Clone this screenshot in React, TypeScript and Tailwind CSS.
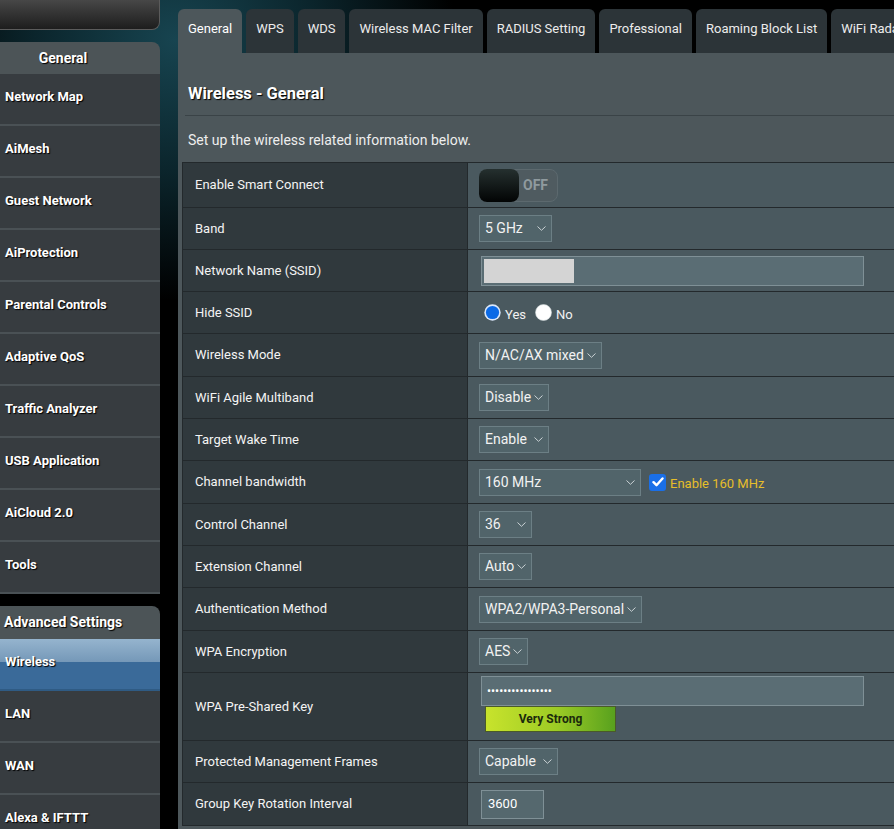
import React from 'react'

/*
  ASUS router admin – Wireless > General page. Sidebar menu on the left,
  tabbed settings panel on the right with a label/value table.
*/

const GENERAL_MENU = [
  'Network Map',
  'AiMesh',
  'Guest Network',
  'AiProtection',
  'Parental Controls',
  'Adaptive QoS',
  'Traffic Analyzer',
  'USB Application',
  'AiCloud 2.0',
  'Tools',
]

const ADVANCED_MENU = ['Wireless', 'LAN', 'WAN', 'Alexa & IFTTT']

const TABS = [
  'General',
  'WPS',
  'WDS',
  'Wireless MAC Filter',
  'RADIUS Setting',
  'Professional',
  'Roaming Block List',
  'WiFi Radar',
]

function NavItem({ label, active }: { label: string; active?: boolean }) {
  return (
    <div
      className={`flex h-[52px] items-center border-b-2 pb-[4px] pl-[5px] text-[13px] font-bold text-white [text-shadow:1px_1px_1px_#000] ${
        active
          ? 'border-[#2f5b84] bg-[linear-gradient(to_bottom,#95b4ce_0%,#7598b8_46%,#3a6a99_47%,#3a6a99_100%)]'
          : 'border-[#4a5155] bg-[#373c40]'
      }`}
    >
      {label}
    </div>
  )
}

function Sidebar() {
  return (
    <aside className="w-[160px] shrink-0">
      <div className="h-[30px] rounded-br-[8px] border-r border-b border-[#5b5b5b] bg-[linear-gradient(to_bottom,#474747,#1d1d1d)]" />

      <div className="mt-[12px]">
        <div className="flex h-[32px] items-center justify-center rounded-tr-[8px] bg-[#4c5457] pr-[34px] text-[14px] font-bold text-white [text-shadow:1px_1px_1px_#000]">
          General
        </div>
        {GENERAL_MENU.map((m) => (
          <NavItem key={m} label={m} />
        ))}
      </div>

      <div className="mt-[12px]">
        <div className="flex h-[33px] items-center rounded-tr-[8px] bg-[#4c5457] pl-[4px] text-[14px] font-bold text-white [text-shadow:1px_1px_1px_#000]">
          Advanced Settings
        </div>
        {ADVANCED_MENU.map((m) => (
          <NavItem key={m} label={m} active={m === 'Wireless'} />
        ))}
      </div>
    </aside>
  )
}

function Chevron() {
  return (
    <svg className="shrink-0" width="9" height="5" viewBox="0 0 9 5" fill="none" stroke="#c9d1d4" strokeWidth="1">
      <path d="M0.5 0.5 4.5 4.3 8.5 0.5" />
    </svg>
  )
}

function Select({ value, width }: { value: string; width: string }) {
  return (
    <div
      className={`flex h-[27px] shrink-0 items-center justify-between gap-[2px] overflow-hidden border border-[#6c7f85] bg-[#51646a] pr-[5px] pl-[5px] text-[14px] whitespace-nowrap text-[#f2f2f2] ${width}`}
    >
      <span>{value}</span>
      <Chevron />
    </div>
  )
}

function Toggle() {
  return (
    <div className="flex h-[33px] w-[79px] items-center rounded-[8px] border border-[#5c696e] bg-[#4f5b60]">
      <div className="-ml-px h-[33px] w-[40px] rounded-[8px] bg-[linear-gradient(to_bottom,#25302f,#020404)]" />
      <span className="ml-[4px] text-[14px] font-bold text-[#8f9a9e]">OFF</span>
    </div>
  )
}

function Radio({ checked }: { checked?: boolean }) {
  return checked ? (
    <svg width="17" height="17" viewBox="0 0 17 17">
      <circle cx="8.5" cy="8.5" r="8.2" fill="#dbe8fb" />
      <circle cx="8.5" cy="8.5" r="6.6" fill="#0b6ae6" />
    </svg>
  ) : (
    <svg width="17" height="17" viewBox="0 0 17 17">
      <circle cx="8.5" cy="8.5" r="8" fill="#ffffff" stroke="#cfd6d9" strokeWidth="0.6" />
    </svg>
  )
}

function Row({
  label,
  height,
  children,
  top,
}: {
  label: string
  height: string
  children: React.ReactNode
  top?: boolean
}) {
  return (
    <div className={`flex border-b border-[#23292c] ${height}`}>
      <div className="flex w-[285px] shrink-0 items-center border-r border-[#23292c] bg-[#30393d] pl-[12px] text-[13px] text-[#f4f4f4]">
        {label}
      </div>
      <div
        className={`flex min-w-0 flex-1 bg-[#4a595f] pl-[11px] ${top ? 'flex-col items-start pt-[3px]' : 'items-center'}`}
      >
        {children}
      </div>
    </div>
  )
}

function SettingsTable() {
  return (
    <div className="mt-[12px] ml-[4px] border-t border-l border-[#23292c]">
      <Row label="Enable Smart Connect" height="h-[45px]">
        <Toggle />
      </Row>
      <Row label="Band" height="h-[42px]">
        <Select value="5 GHz" width="w-[73px]" />
      </Row>
      <Row label="Network Name (SSID)" height="h-[42px]">
        <div className="ml-[2px] flex h-[30px] w-[383px] items-center border border-[#7f9096] bg-[#5a6d74] pl-[2px]">
          <div className="h-[24px] w-[90px] bg-[#d4d4d4]" />
        </div>
      </Row>
      <Row label="Hide SSID" height="h-[42px]">
        <div className="flex items-center pl-[5px] text-[13px] text-[#f2f2f2]">
          <Radio checked />
          <span className="mt-[5px] ml-[4px]">Yes</span>
          <span className="ml-[9px]">
            <Radio />
          </span>
          <span className="mt-[5px] ml-[4px]">No</span>
        </div>
      </Row>
      <Row label="Wireless Mode" height="h-[43px]">
        <Select value="N/AC/AX mixed" width="w-[123px]" />
      </Row>
      <Row label="WiFi Agile Multiband" height="h-[42px]">
        <Select value="Disable" width="w-[70px]" />
      </Row>
      <Row label="Target Wake Time" height="h-[42px]">
        <Select value="Enable" width="w-[70px]" />
      </Row>
      <Row label="Channel bandwidth" height="h-[43px]">
        <Select value="160 MHz" width="w-[162px]" />
        <div className="ml-[8px] flex h-[17px] w-[17px] items-center justify-center rounded-[3px] bg-[#1a6fe8]">
          <svg width="12" height="10" viewBox="0 0 12 10" fill="none" stroke="#fff" strokeWidth="2.4" strokeLinecap="round" strokeLinejoin="round">
            <path d="M1.5 5.2 4.5 8.2 10.5 1.5" />
          </svg>
        </div>
        <span className="mt-[3px] ml-[4px] text-[13px] text-[#e6be2a]">Enable 160 MHz</span>
      </Row>
      <Row label="Control Channel" height="h-[42px]">
        <Select value="36" width="w-[53px]" />
      </Row>
      <Row label="Extension Channel" height="h-[42px]">
        <Select value="Auto" width="w-[53px]" />
      </Row>
      <Row label="Authentication Method" height="h-[43px]">
        <Select value="WPA2/WPA3-Personal" width="w-[163px]" />
      </Row>
      <Row label="WPA Encryption" height="h-[42px]">
        <Select value="AES" width="w-[49px]" />
      </Row>
      <Row label="WPA Pre-Shared Key" height="h-[68px]" top>
        <div className="ml-[2px] flex h-[30px] w-[383px] items-center border border-[#7f9096] bg-[#5a6d74] pl-[5px] text-[12px] leading-none text-white">
          ••••••••••••••••
        </div>
        <div className="ml-[6px] flex h-[26px] w-[131px] items-center justify-center border border-[#4a5a2a] bg-[linear-gradient(to_right,#c8e32c,#9ccb25_55%,#58a11e)] text-[12px] font-bold text-[#1b2a0c]">
          Very Strong
        </div>
      </Row>
      <Row label="Protected Management Frames" height="h-[42px]">
        <Select value="Capable" width="w-[79px]" />
      </Row>
      <Row label="Group Key Rotation Interval" height="h-[43px]">
        <div className="ml-[2px] flex h-[29px] w-[63px] items-center border border-[#7f9096] bg-[#55686e] pl-[6px] text-[13px] text-white">
          3600
        </div>
      </Row>
    </div>
  )
}

export default function App() {
  return (
    <div className="flex h-[829px] w-[894px] overflow-hidden bg-[radial-gradient(ellipse_280px_260px_at_175px_40px,#174450_0%,#0b252c_50%,#000_100%)] font-['Roboto','Liberation_Sans',sans-serif]">
      <Sidebar />

      <main className="ml-[18px] min-w-0 flex-1 pt-[9px]">
        <div className="flex h-[44px] gap-[4px] overflow-hidden whitespace-nowrap">
          {TABS.map((t, i) => (
            <div
              key={t}
              className={`flex shrink-0 items-center rounded-t-[6px] px-[10px] pb-[4px] text-[13px] ${
                i === 0 ? 'bg-[#4d575b] text-white' : 'bg-[#2c3438] text-[#ececec]'
              }`}
            >
              {t}
            </div>
          ))}
        </div>

        <div className="h-full bg-[#4d575b]">
          <div className="ml-[10px] pt-[31px] text-[16.5px] leading-[20px] font-bold text-white [text-shadow:1px_1px_1px_#000]">
            Wireless - General
          </div>
          <div className="mt-[11px] ml-[7px] h-px bg-[#3a4347]" />
          <div className="mt-[14px] ml-[10px] text-[14px] leading-[20px] text-[#eeeeee]">
            Set up the wireless related information below.
          </div>
          <SettingsTable />
        </div>
      </main>
    </div>
  )
}
